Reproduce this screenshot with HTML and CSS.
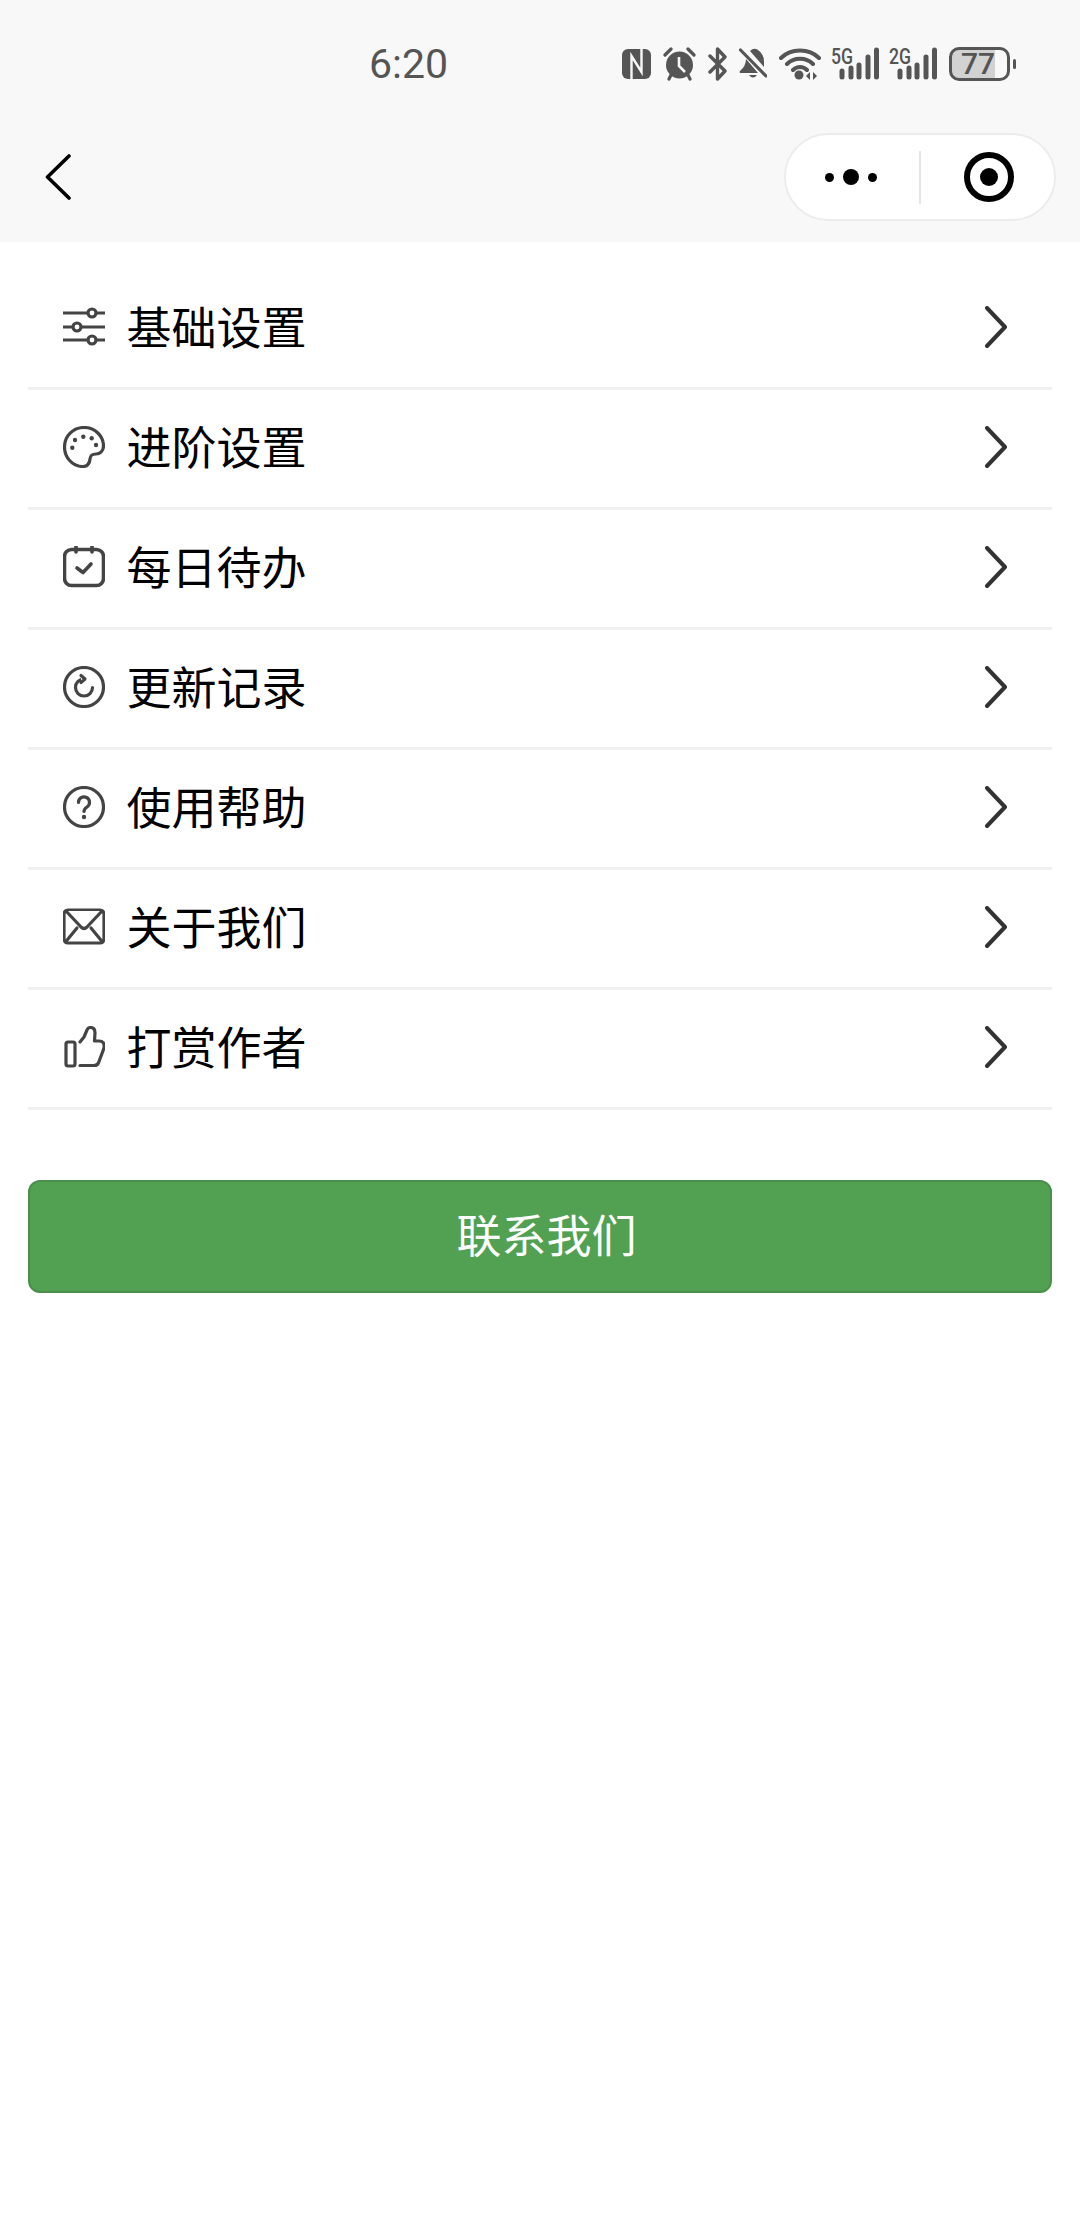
FILE: index.html
```html
<!DOCTYPE html>
<html lang="zh-CN">
<head>
    <meta charset="UTF-8">
    <meta name="viewport" content="width=device-width, initial-scale=1.0">
    <title>设置</title>
    <link rel="stylesheet" href="styles.css">
</head>
<body>
    <div class="top-bar">
        <div class="status-bar">
            <span class="time">6:20</span>
            <div class="status-icons">
                <!-- nfc -->
                <svg width="29" height="32" viewBox="0 0 29 32">
                    <rect x="0" y="1" width="29" height="30" rx="6" fill="#555"/>
                    <path d="M9.500 31 V8 L19.500 24 V1" fill="none" stroke="#f8f8f8" stroke-width="2.400"/>
                </svg>
                <!-- alarm -->
                <svg width="33" height="34" viewBox="0 0 33 34">
                    <circle cx="16.500" cy="18" r="13.500" fill="#555"/>
                    <path d="M16 10 V19 L22 25" fill="none" stroke="#f8f8f8" stroke-width="2.600"/>
                    <path d="M2 8 L8 2 M31 8 L25 2 M6 32 L8 28 M27 32 L25 28" stroke="#555" stroke-width="3.200" stroke-linecap="round"/>
                </svg>
                <!-- bluetooth -->
                <svg width="19" height="34" viewBox="0 0 19 34">
                    <path d="M2 9 L17 24 L9.500 32 V2 L17 10 L2 25" fill="none" stroke="#555" stroke-width="3.400" stroke-linejoin="round" stroke-linecap="round"/>
                </svg>
                <!-- muted bell -->
                <svg width="28" height="34" viewBox="0 0 28 34">
                    <path d="M11 4 Q15 0 19 3 Q25 7 25 15 V20 Z" fill="#555"/>
                    <path d="M7 12 L19 26 H1 Q0 25 1 24 Q7 19 7 12 Z" fill="#555"/>
                    <path d="M1.500 3 L27 29" stroke="#555" stroke-width="3.200" stroke-linecap="round"/>
                    <path d="M10 28 H18 Q14 33 10 28 Z" fill="#555"/>
                </svg>
                <!-- wifi -->
                <svg width="42" height="34" viewBox="0 0 42 34">
                    <path d="M2 11 C12 1 30 1 40 11 M8 17 C15 10 27 10 34 17 M14 23 C18 19 24 19 28 23" fill="none" stroke="#555" stroke-width="4" stroke-linecap="round"/>
                    <circle cx="20" cy="28" r="4.500" fill="#555"/>
                    <path d="M31 25 V33 L27 29 Z M34 25 V33 L38 29 Z" fill="#555"/>
                </svg>
                <!-- 5g signal -->
                <svg class="signal" width="48" height="42" viewBox="-2 -4 48 42">
                    <text x="-2" y="17" class="net-label" textLength="22" lengthAdjust="spacingAndGlyphs">5G</text>
                    <path d="M9 24 V30 M18 21 V30 M26 18 V30 M35 10 V30 M43.500 3 V30" stroke="#555" stroke-width="5" stroke-linecap="round"/>
                </svg>
                <!-- 2g signal -->
                <svg class="signal" width="48" height="42" viewBox="-2 -4 48 42">
                    <text x="-2" y="17" class="net-label" textLength="22" lengthAdjust="spacingAndGlyphs">2G</text>
                    <path d="M9 24 V30 M18 21 V30 M26 18 V30 M35 10 V30 M43.500 3 V30" stroke="#555" stroke-width="5" stroke-linecap="round"/>
                </svg>
                <div class="battery">
                    <div class="battery-body">77</div>
                    <div class="battery-nub"></div>
                </div>
            </div>
        </div>
        <div class="nav-bar">
            <svg class="back" width="26" height="46" viewBox="0 0 26 46">
                <path d="M24 2 L2.500 23 L24 44" fill="none" stroke="#000" stroke-width="3.600" stroke-linecap="round" stroke-linejoin="round"/>
            </svg>
            <div class="capsule">
                <div class="capsule-more">
                    <span class="dot"></span>
                    <span class="dot dot-big"></span>
                    <span class="dot"></span>
                </div>
                <div class="capsule-line"></div>
                <div class="capsule-close">
                    <span class="target"></span>
                </div>
            </div>
        </div>
    </div>

    <div class="menu">
        <div class="menu-item">
            <svg class="menu-icon" viewBox="0 0 42 42">
                <path d="M0 7 H25 M33 7 H42 M0 21 H10 M18 21 H42 M0 34 H25 M33 34 H42"/>
                <circle cx="29" cy="7" r="4"/>
                <circle cx="14" cy="21" r="4"/>
                <circle cx="29" cy="34" r="4"/>
            </svg>
            <span class="menu-text">基础设置</span>
            <svg class="arrow" viewBox="0 0 24 42"><path d="M3 2 L21 21 L3 40"/></svg>
        </div>
        <div class="menu-item">
            <svg class="menu-icon" viewBox="0 0 42 42">
                <path d="M21 1.500 C32 1.500 40.500 10 40.500 20 C40.500 25 37 28 33 28 C29 28 27.500 29 27 33 C26.500 38 24 40.500 20 40.500 C9 40.500 1.500 31 1.500 21 C1.500 10 10 1.500 21 1.500 Z"/>
                <circle class="solid" cx="12" cy="14" r="2.200"/>
                <circle class="solid" cx="20.300" cy="10.700" r="2.200"/>
                <circle class="solid" cx="28.700" cy="12.300" r="2.200"/>
                <circle class="solid" cx="33" cy="19" r="2.200"/>
                <circle class="solid" cx="9.300" cy="21.700" r="2.200"/>
            </svg>
            <span class="menu-text">进阶设置</span>
            <svg class="arrow" viewBox="0 0 24 42"><path d="M3 2 L21 21 L3 40"/></svg>
        </div>
        <div class="menu-item">
            <svg class="menu-icon icon-heavy" viewBox="0 0 42 42">
                <rect x="1.500" y="3.500" width="39" height="36" rx="7"/>
                <path d="M13 0 V6 M29 0 V6"/>
                <path d="M14 22 L20 26.500 L28 18"/>
            </svg>
            <span class="menu-text">每日待办</span>
            <svg class="arrow" viewBox="0 0 24 42"><path d="M3 2 L21 21 L3 40"/></svg>
        </div>
        <div class="menu-item">
            <svg class="menu-icon" viewBox="0 0 42 42">
                <circle cx="21" cy="21" r="19.500"/>
                <path d="M21 13 A8.500 8.500 0 1 0 29.500 21.500"/>
                <path d="M18 9.500 L22 13 L18 16.500"/>
            </svg>
            <span class="menu-text">更新记录</span>
            <svg class="arrow" viewBox="0 0 24 42"><path d="M3 2 L21 21 L3 40"/></svg>
        </div>
        <div class="menu-item">
            <svg class="menu-icon" viewBox="0 0 42 42">
                <circle cx="21" cy="21" r="19.500"/>
                <path d="M15.500 16.500 A5.500 5.500 0 1 1 24 21 C22 22.400 21 23.400 21 25.500"/>
                <circle class="solid" cx="21" cy="31" r="2.200"/>
            </svg>
            <span class="menu-text">使用帮助</span>
            <svg class="arrow" viewBox="0 0 24 42"><path d="M3 2 L21 21 L3 40"/></svg>
        </div>
        <div class="menu-item">
            <svg class="menu-icon" viewBox="0 0 42 42">
                <rect x="1" y="4" width="40" height="33" rx="4"/>
                <path d="M3 5 L18 21 Q21 24 24 21 L39 5"/>
                <path d="M2.500 36 L14 22 M39.500 36 L28 22"/>
            </svg>
            <span class="menu-text">关于我们</span>
            <svg class="arrow" viewBox="0 0 24 42"><path d="M3 2 L21 21 L3 40"/></svg>
        </div>
        <div class="menu-item">
            <svg class="menu-icon" viewBox="0 0 42 42">
                <rect x="3" y="16" width="9" height="24" rx="2"/>
                <path d="M17 39.500 H31 Q35 39.500 36 35.500 L41 22 Q42 15 36 15 H31.500 L32 7 Q32 1.500 27.500 1.500 Q25 1.500 24 4 L21 11 L17 16"/>
            </svg>
            <span class="menu-text">打赏作者</span>
            <svg class="arrow" viewBox="0 0 24 42"><path d="M3 2 L21 21 L3 40"/></svg>
        </div>
    </div>

    <div class="contact-wrap">
        <button class="contact-button">联系我们</button>
    </div>
</body>
</html>
```

FILE: styles.css
```css
body {
    margin: 0;
    min-height: 2228px;
    background-color: #fff;
    font-family: "Noto Sans CJK SC", "Noto Sans", sans-serif;
}
.top-bar {
    background-color: #f8f8f8;
    height: 242px;
}
.status-bar {
    display: flex;
    align-items: center;
    justify-content: space-between;
    height: 128px;
    padding: 0 64px 0 369px;
}
.time {
    font-family: Roboto, sans-serif;
    font-size: 41px;
    color: #555;
}
.status-icons {
    display: flex;
    align-items: center;
    gap: 12px;
}
.signal {
    margin-left: -2px;
}
.net-label {
    font-family: Roboto, sans-serif;
    font-size: 22px;
    font-weight: 500;
    fill: #555;
}
.battery {
    display: flex;
    align-items: center;
    gap: 3px;
}
.battery-body {
    box-sizing: border-box;
    width: 61px;
    height: 34px;
    padding-left: 9px;
    border: 3px solid #555;
    border-radius: 10px;
    background: linear-gradient(to right, #d2d2d2 79%, transparent 79%);
    font-family: Roboto, sans-serif;
    font-size: 30px;
    font-weight: 500;
    line-height: 28px;
    color: #555;
}
.battery-nub {
    width: 3px;
    height: 10px;
    border-radius: 2px;
    background-color: #555;
}
.nav-bar {
    display: flex;
    align-items: center;
    justify-content: space-between;
    height: 88px;
    padding: 5px 24px 21px 45px;
}
.capsule {
    box-sizing: border-box;
    display: flex;
    align-items: center;
    width: 272px;
    height: 88px;
    background-color: #fff;
    border: 2px solid #ececec;
    border-radius: 44px;
}
.capsule-more {
    display: flex;
    align-items: center;
    justify-content: center;
    gap: 9px;
    flex: 1;
    padding-right: 3px;
}
.dot {
    width: 9px;
    height: 9px;
    border-radius: 50%;
    background-color: #000;
}
.dot-big {
    width: 16px;
    height: 16px;
}
.capsule-line {
    width: 2px;
    height: 53px;
    background-color: #e4e4e4;
}
.capsule-close {
    display: flex;
    align-items: center;
    justify-content: center;
    flex: 1;
    padding-left: 3px;
}
.target {
    box-sizing: border-box;
    display: flex;
    align-items: center;
    justify-content: center;
    width: 50px;
    height: 50px;
    border: 6px solid #000;
    border-radius: 50%;
}
.target::before {
    content: "";
    width: 18px;
    height: 18px;
    border-radius: 50%;
    background-color: #000;
}
.menu {
    padding: 28px 28px 0;
}
.menu-item {
    box-sizing: border-box;
    display: flex;
    align-items: center;
    height: 120px;
    padding: 0 44px 4px 35px;
    border-bottom: 3px solid #f0f0f0;
}
.menu-icon {
    width: 42px;
    height: 42px;
    margin-right: 21.5px;
    fill: #fff;
    stroke: #444;
    stroke-width: 3.2;
    stroke-linecap: round;
    stroke-linejoin: round;
}
.icon-heavy {
    stroke-width: 3.6;
}
.menu-icon .solid {
    fill: #444;
    stroke: none;
}
.menu-text {
    flex: 1;
    margin-bottom: 2px;
    font-size: 45px;
    line-height: 60px;
    color: #000;
}
.arrow {
    width: 24px;
    height: 42px;
    fill: none;
    stroke: #333;
    stroke-width: 4;
    stroke-linecap: round;
    stroke-linejoin: round;
}
.contact-wrap {
    padding: 70px 28px 0;
}
.contact-button {
    display: block;
    width: 100%;
    height: 113px;
    padding: 0 0 6px 13px;
    background-color: #52a052;
    border: 2px solid #4a8f4c;
    border-radius: 12px;
    font-family: inherit;
    font-size: 45px;
    color: #fff;
}
```
